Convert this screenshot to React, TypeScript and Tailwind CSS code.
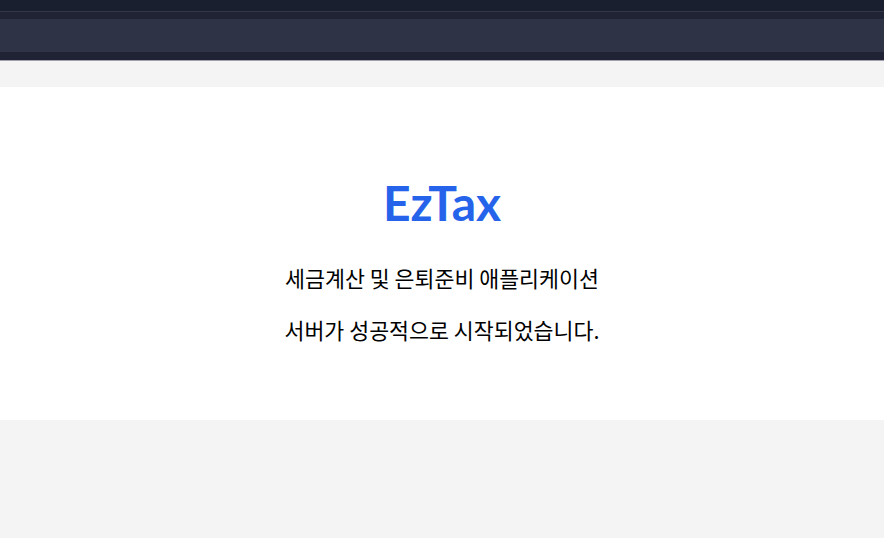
export default function App() {
    return (
        <div className="min-h-[538px] bg-[#f4f4f4]">
            {/* HEADER */}
            <div className="flex flex-col">
                <div className="h-[11px] bg-[#1a1f30]" />
                <div className="h-px bg-[#333849]" />
                <div className="h-[7px] bg-[#1f2334]" />
                <div className="h-[33px] bg-[#2e3346]" />
                <div className="h-2 bg-[#1f2334]" />
                <div className="h-px bg-[#a0a0ac]" />
            </div>

            <div className="h-[26px]" />

            {/* MAIN */}
            <div className="h-[333px] bg-white flex flex-col items-center pt-[92px]">
                <h1 className="text-[48px] leading-none font-bold text-[#2563eb] font-['Lato',sans-serif]">
                    EzTax
                </h1>
                <p className="mt-[40px] text-[21.7px] leading-none text-black font-['Noto_Sans_CJK_KR',sans-serif]">
                    세금계산 및 은퇴준비 애플리케이션
                </p>
                <p className="mt-[30px] text-[21.7px] leading-none text-black font-['Noto_Sans_CJK_KR',sans-serif]">
                    서버가 성공적으로 시작되었습니다.
                </p>
            </div>
        </div>
    );
}
